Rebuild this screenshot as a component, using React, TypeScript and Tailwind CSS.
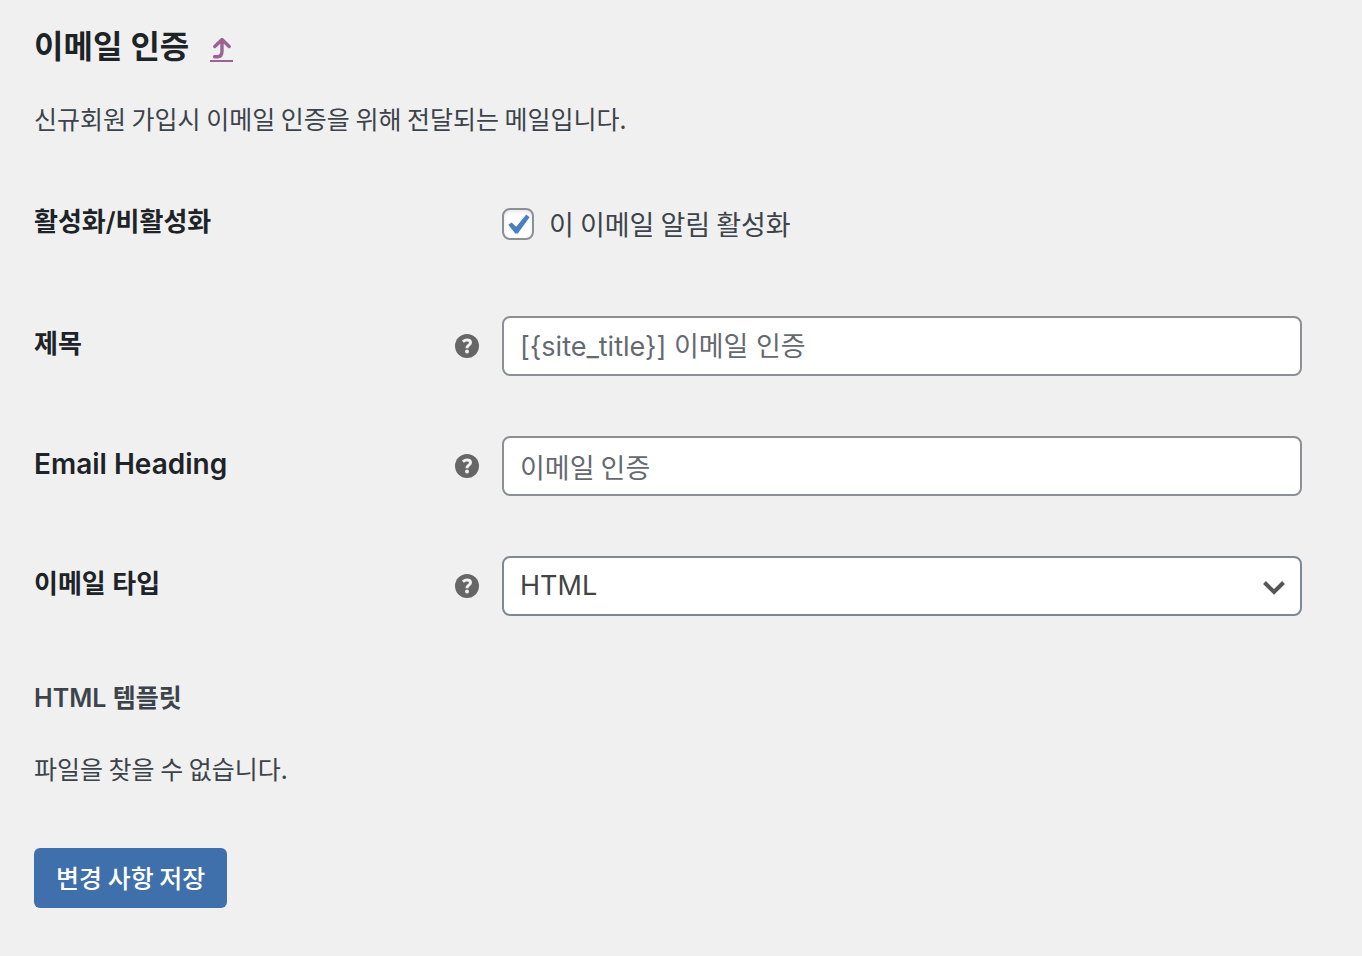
import { useState } from "react";

function HelpTip({ text }: { text: string }) {
  return (
    <button type="button" aria-label={text} title={text} className="size-6 shrink-0 text-[#666666]">
      <svg className="size-6" viewBox="0 0 24 24" fill="none">
        <circle cx="12" cy="12" r="12" fill="currentColor" />
        <path
          d="M7.9 7.6C9.2 6.6 10.5 6.1 12 6.1c2.2 0 3.5 1 3.5 2.6 0 2.5-3.6 2.4-3.6 5.5"
          stroke="#f0f0f0"
          strokeWidth="3"
        />
        <circle cx="12" cy="17.6" r="2" fill="#f0f0f0" />
      </svg>
    </button>
  );
}

interface FieldRowProps {
  id: string;
  label: string;
  help: string;
  latin?: boolean;
  children: React.ReactNode;
}

function FieldRow({ id, label, help, latin, children }: FieldRowProps) {
  return (
    <div className="flex items-center">
      <div className="flex w-[468px] shrink-0 items-center justify-between pr-[23px]">
        <label
          htmlFor={id}
          className={`pb-1 leading-9 font-semibold text-[#1d2327] ${latin ? "text-[28px]" : "text-[26px]"}`}
        >
          {label}
        </label>
        <HelpTip text={help} />
      </div>
      <div className="relative min-w-0 flex-1">{children}</div>
    </div>
  );
}

export default function App() {
  const [enabled, setEnabled] = useState(true);
  const [subject, setSubject] = useState("");
  const [heading, setHeading] = useState("");

  return (
    <main className="min-h-screen bg-[#f0f0f0] pt-6 pr-[60px] pb-12 pl-[34px] font-['Inter','Noto_Sans_CJK_KR',sans-serif] text-[#3c434a]">
      <form onSubmit={(e) => e.preventDefault()}>
        <div className="flex items-center gap-[21px]">
          <h2 className="text-[32px] leading-[46px] font-semibold text-[#1d2327]">이메일 인증</h2>
          <a href="#emails" aria-label="이메일 목록으로 돌아가기" className="text-[#9b6295]">
            <svg className="mt-1.5 h-7 w-6" viewBox="0 0 24 28" fill="none" stroke="currentColor">
              <path
                d="M4.8 10.5L12 3.5L19.2 10.5M12 4V15C12 18.8 10.6 20.8 7.5 20.8H4.5"
                strokeWidth="3.4"
                strokeLinecap="round"
                strokeLinejoin="round"
              />
              <path d="M0 25H23" strokeWidth="2" />
            </svg>
          </a>
        </div>
        <p className="mt-[30px] font-['Noto_Sans_CJK_KR',sans-serif] text-[25px] leading-9">
          신규회원 가입시 이메일 인증을 위해 전달되는 메일입니다.
        </p>

        {/* Settings */}
        <div className="mt-[68px] flex flex-col gap-[60px]">
          <div className="flex items-center pb-3">
            <div className="w-[468px] shrink-0 pb-1 text-[26px] leading-9 font-semibold text-[#1d2327]">
              활성화/비활성화
            </div>
            <label className="flex items-center gap-[15px] font-['Noto_Sans_CJK_KR',sans-serif] text-[27px] leading-10">
              <span className="relative size-8">
                <input
                  type="checkbox"
                  checked={enabled}
                  onChange={(e) => setEnabled(e.target.checked)}
                  className="peer block size-8 appearance-none rounded-lg border-2 border-[#8c8f94] bg-white shadow-[inset_0_2px_4px_rgba(0,0,0,0.1)]"
                />
                <svg
                  className="pointer-events-none absolute inset-0 hidden size-8 text-[#4a7fc1] peer-checked:block"
                  viewBox="0 0 32 32"
                  fill="currentColor"
                >
                  <path d="M24.2 6.6L27.6 9.2L15.8 25.6H13.2L6.3 16.8L9.6 14.5L14.2 18.8Z" />
                </svg>
              </span>
              이 이메일 알림 활성화
            </label>
          </div>

          <FieldRow id="subject" label="제목" help="이메일 제목">
            <input
              id="subject"
              type="text"
              value={subject}
              onChange={(e) => setSubject(e.target.value)}
              placeholder="[{site_title}] 이메일 인증"
              className="block h-[60px] w-full rounded-lg border-2 border-[#8c8f94] bg-white px-4 text-[27px] placeholder:text-[#646970]"
            />
          </FieldRow>

          <FieldRow id="heading" label="Email Heading" help="이메일 머리글" latin>
            <input
              id="heading"
              type="text"
              value={heading}
              onChange={(e) => setHeading(e.target.value)}
              placeholder="이메일 인증"
              className="block h-[60px] w-full rounded-lg border-2 border-[#8c8f94] bg-white px-4 font-['Noto_Sans_CJK_KR',sans-serif] text-[27px] placeholder:text-[#646970]"
            />
          </FieldRow>

          <FieldRow id="email-type" label="이메일 타입" help="이메일 형식">
            <select
              id="email-type"
              defaultValue="html"
              className="block h-[60px] w-full appearance-none rounded-lg border-2 border-[#7e8993] bg-white px-4 text-[27px] text-[#444444]"
            >
              <option value="html">HTML</option>
            </select>
            <svg
              className="pointer-events-none absolute top-6 right-4 h-4 w-6 text-[#555555]"
              viewBox="0 0 24 16"
              fill="none"
              stroke="currentColor"
              strokeWidth="4"
            >
              <path d="M2.5 2.5L12 12L21.5 2.5" />
            </svg>
          </FieldRow>
        </div>

        {/* Template */}
        <h4 className="mt-16 text-[25px] leading-9 font-semibold">HTML 템플릿</h4>
        <p className="mt-[34px] font-['Noto_Sans_CJK_KR',sans-serif] text-[25px] leading-9">파일을 찾을 수 없습니다.</p>

        <button
          type="submit"
          className="mt-[62px] h-[60px] rounded-md bg-[#3f70ac] px-[22px] font-['Noto_Sans_CJK_KR',sans-serif] text-[25px] font-medium text-white"
        >
          변경 사항 저장
        </button>
      </form>
    </main>
  );
}
